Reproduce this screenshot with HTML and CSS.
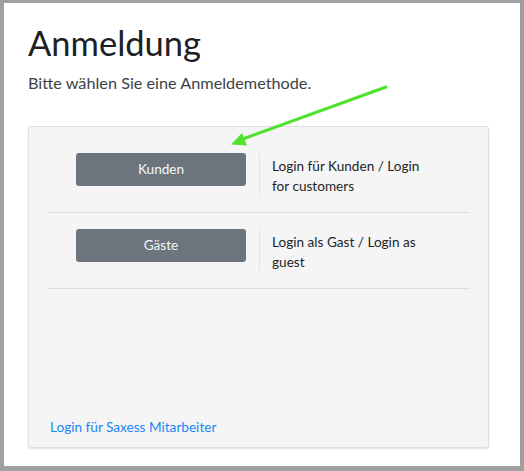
FILE: index.html
```html
<!DOCTYPE html>
<html lang="de">
<head>
<meta charset="utf-8">
<title>Anmeldung</title>
<link rel="stylesheet" href="styles.css">
</head>
<body>
<div class="frame">
  <main class="page">
    <h1 class="title">Anmeldung</h1>
    <p class="lead">Bitte wählen Sie eine Anmeldemethode.</p>
    <section class="card">
      <div class="option">
        <button class="btn" type="button">Kunden</button>
        <div class="desc">Login für Kunden / Login for customers</div>
      </div>
      <div class="option">
        <button class="btn" type="button">Gäste</button>
        <div class="desc">Login als Gast / Login as guest</div>
      </div>
      <div class="card-footer">
        <a class="staff-link" href="#">Login für Saxess Mitarbeiter</a>
      </div>
    </section>
  </main>
  <svg class="pointer" width="524" height="471" viewBox="0 0 524 471" aria-hidden="true">
    <line x1="386" y1="87" x2="240" y2="140" stroke="#4fe330" stroke-width="3" stroke-linecap="round"/>
    <polygon points="231,144.5 242,133 247,145.5" fill="#4fe330"/>
  </svg>
</div>
</body>
</html>
```
FILE: styles.css
```css
* { box-sizing: border-box; }

html, body {
  margin: 0;
  padding: 0;
  background: #a0a0a0;
}

.frame {
  position: relative;
  width: 524px;
  height: 471px;
  border-style: solid;
  border-color: #a0a0a0;
  border-width: 3px 4px 5px 4px;
  background: #ffffff;
  overflow: hidden;
}

.page {
  padding: 19px 31px 0 24px;
  font-family: Lato, "Open Sans", sans-serif;
  color: #212529;
}

.title {
  margin: 0;
  font-size: 34.5px;
  font-weight: 400;
  line-height: 1.2;
  color: #1d2125;
}

.lead {
  margin: 8px 0 0;
  font-size: 16.25px;
  line-height: 1.45;
  color: #3d4247;
}

.card {
  margin-top: 31px;
  height: 322px;
  display: flex;
  flex-direction: column;
  padding: 10px 18px 0;
  background: #f5f5f5;
  border: 1px solid #e0e0e0;
  border-radius: 3px;
  box-shadow: 0 1px 2px rgba(0, 0, 0, 0.12);
  font-size: 13.6px;
}

.option {
  display: flex;
  align-items: flex-start;
  padding: 16px 0 18px;
  border-bottom: 1px solid #dfdfdf;
}

.btn {
  margin-left: 29px;
  width: 170px;
  height: 33px;
  padding: 0;
  border: none;
  border-radius: 3px;
  background: #6c757d;
  color: #f4f5f6;
  font-family: inherit;
  font-size: 13.6px;
}

.desc {
  margin: 1px 0 0 13px;
  width: 178px;
  height: 40px;
  padding: 2px 0 0 12px;
  border-left: 1px solid #e2e2e2;
  line-height: 20px;
  color: #212529;
}

.card-footer {
  margin-top: auto;
  padding: 0 0 10px 3px;
  line-height: 20px;
}

.staff-link {
  color: #1a86f5;
  text-decoration: none;
}

.pointer {
  position: absolute;
  left: -4px;
  top: -3px;
  pointer-events: none;
}
```
